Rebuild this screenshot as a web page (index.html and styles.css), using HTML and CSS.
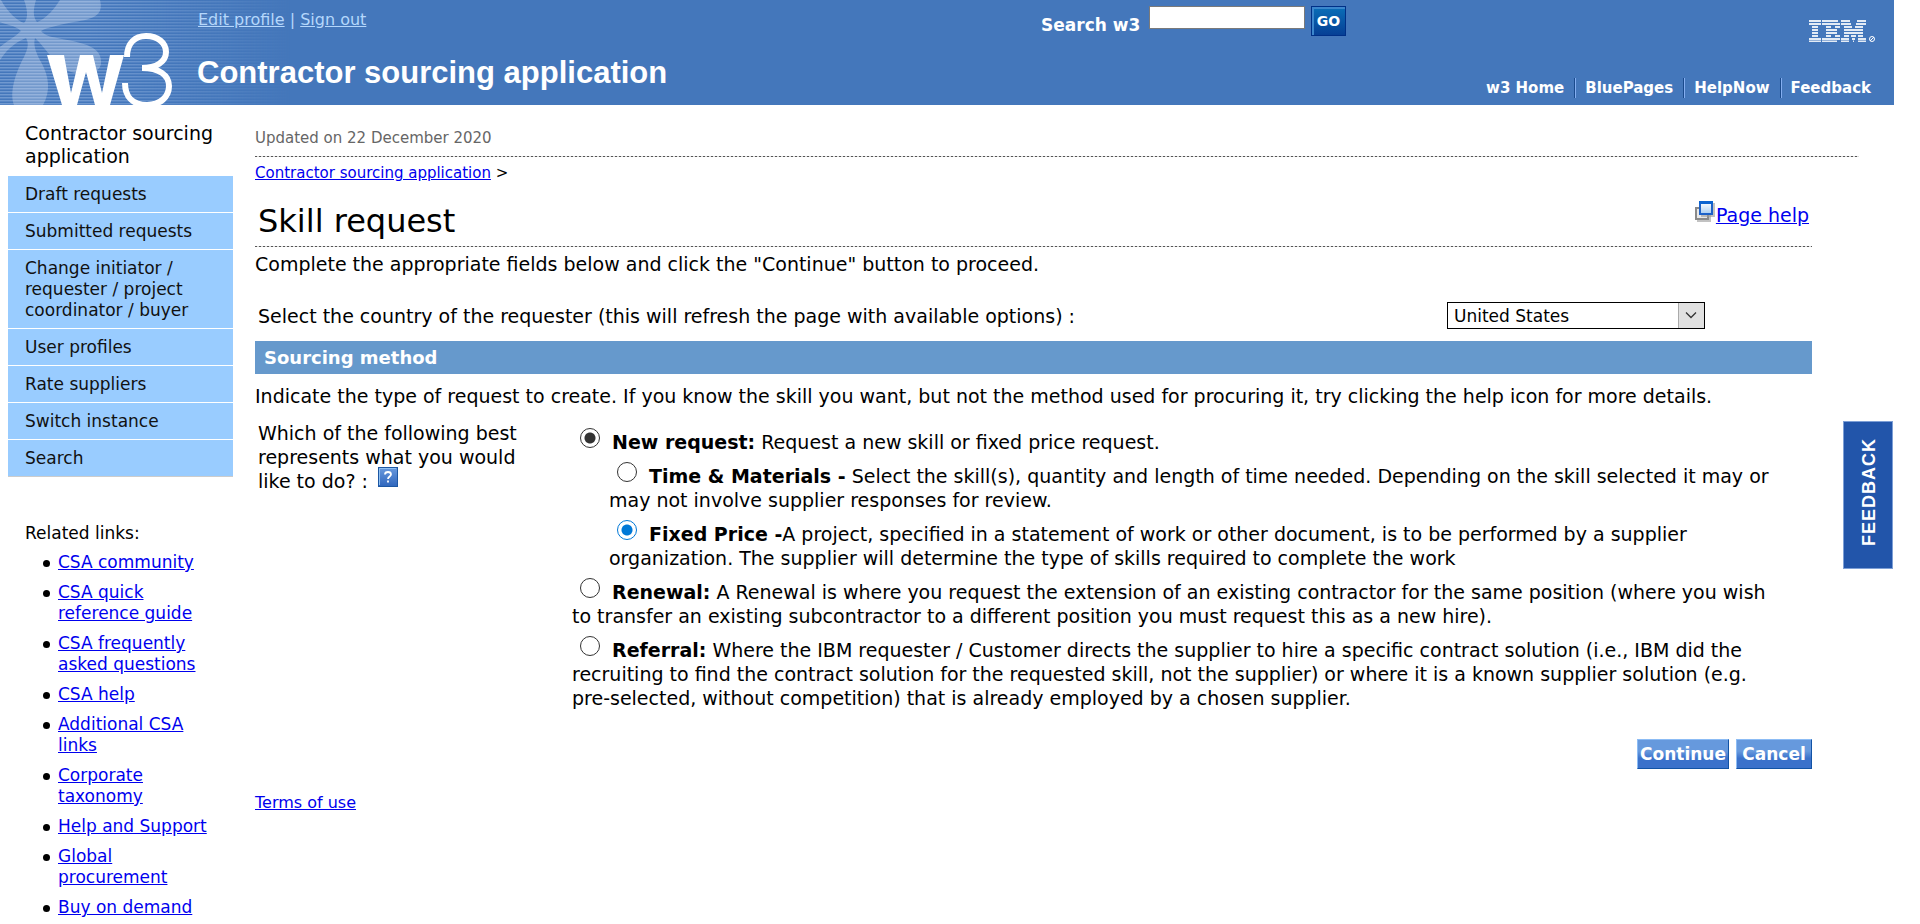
FILE: index.html
```html
<!DOCTYPE html>
<html lang="en">
<head>
<meta charset="utf-8">
<title>Contractor sourcing application</title>
<link rel="stylesheet" href="styles.css">
</head>
<body>
<header class="masthead">
  <div class="stripes"></div>
  <svg class="logo" viewBox="0 0 180 105" aria-label="w3">
    <g fill="#fff" fill-opacity=".25">
      <path d="M0 0H1C8 13 18 21 24 23C29 18 27 8 24 0H36C33 10 33 17 37 22C46 19 55 8 60 0H100C104 15 94 19 74 22C60 25 48 27 41 31C45 36 52 37 62 39C84 43 103 47 101 64C99 74 84 76 71 72C55 66 46 48 35 38C33 45 36 53 41 62C49 76 51 91 43 105H14C9 92 16 72 24 57C28 49 29 43 26 38C19 41 9 46 0 60V47C7 41 15 37 21 31C15 25 6 25 0 22Z"/>
    </g>
    <path fill="#fff" d="M47 55H64L71 93L80 55H93L102 93L110 55H124L110 105H95L86 72L77 105H62Z"/>
    <path fill="none" stroke="#fff" stroke-width="6" d="M127 57C127 43 135 36 146 36C158 36 166 43 166 52C166 62 156 68 142 68C159 68 169 75 169 86C169 97 160 105 147 105C133 105 125 97 125 83"/>
  </svg>
  <div class="brand">
    <nav class="account"><a href="#">Edit profile</a> | <a href="#">Sign out</a></nav>
    <div class="site-title">Contractor sourcing application</div>
  </div>
  <form class="search">
    <label for="q">Search w3</label>
    <input id="q" type="text">
    <button type="button">GO</button>
  </form>
  <div class="corner">
    <svg class="ibm" viewBox="0 0 66 22" aria-label="IBM">
      <path stroke="#fff" stroke-opacity=".85" stroke-width="2" d="M0 1H12M13 1H29M32 1H41M48 1H57M0 4H12M13 4H31M32 4H42M47 4H57M3 7H9M17 7H22M26 7H31M35 7H43M46 7H54M3 10H9M17 10H28M35 10H54M3 13H9M17 13H28M35 13H54M3 16H9M17 16H22M26 16H31M35 16H40M42 16H47M49 16H54M0 19H12M13 19H31M32 19H40M43 19H46M49 19H57M0 21.500H12M13 21.500H28M32 21.500H40M44 21.500H45M49 21.500H57"/>
      <circle cx="63" cy="19" r="2.500" fill="none" stroke="#fff"/><path d="M61 21L65 17" stroke="#fff"/>
    </svg>
    <nav class="global"><a href="#">w3 Home</a><a href="#">BluePages</a><a href="#">HelpNow</a><a href="#">Feedback</a></nav>
  </div>
</header>
<div class="columns">
  <aside class="side">
    <div class="side-title">Contractor sourcing application</div>
    <nav class="menu">
      <a href="#">Draft requests</a>
      <a href="#">Submitted requests</a>
      <a href="#">Change initiator / requester / project coordinator / buyer</a>
      <a href="#">User profiles</a>
      <a href="#">Rate suppliers</a>
      <a href="#">Switch instance</a>
      <a href="#">Search</a>
    </nav>
    <div class="related-title">Related links:</div>
    <ul class="related">
      <li><a href="#">CSA community</a></li>
      <li><a href="#">CSA quick reference guide</a></li>
      <li><a href="#">CSA frequently asked questions</a></li>
      <li><a href="#">CSA help</a></li>
      <li><a href="#">Additional CSA links</a></li>
      <li><a href="#">Corporate taxonomy</a></li>
      <li><a href="#">Help and Support</a></li>
      <li><a href="#">Global procurement</a></li>
      <li><a href="#">Buy on demand</a></li>
    </ul>
  </aside>
  <main class="main">
    <div class="updated">Updated on 22 December 2020</div>
    <div class="rule"></div>
    <div class="crumbs"><a href="#">Contractor sourcing application</a> &gt;</div>
    <div class="content">
      <div class="title-row">
        <h1>Skill request</h1>
        <div class="help">
          <svg class="help-icon" viewBox="0 0 20 21">
            <defs><linearGradient id="pane" x2="0" y2="1"><stop offset="0" stop-color="#fff"/><stop offset="1" stop-color="#a8cdf2"/></linearGradient></defs>
            <path fill="#999" fill-opacity=".6" d="M2 7H16V21H2Z"/>
            <path fill="#e8e8e8" stroke="#8a8a8a" stroke-width="2" d="M1 7H13V18H1Z"/>
            <path fill="#999" fill-opacity=".6" d="M6 2H20V16H6Z"/>
            <path fill="url(#pane)" stroke="#1e62c8" stroke-width="2" d="M5 1H17V13H5Z"/>
            <path fill="#0a63d0" d="M4 0H18V3H4Z"/>
          </svg><a href="#">Page help</a>
        </div>
      </div>
      <div class="rule"></div>
      <p class="intro">Complete the appropriate fields below and click the "Continue" button to proceed.</p>
      <form>
        <div class="country-row">
          <label for="country">Select the country of the requester (this will refresh the page with available options) :</label>
          <div class="select-box">
            <select id="country"><option>United States</option></select>
            <svg class="chevron" viewBox="0 0 25 24"><path fill="none" stroke="#333" stroke-width="1.300" d="M7 9L12 14L17 9"/></svg>
          </div>
        </div>
        <h2>Sourcing method</h2>
        <p class="lead">Indicate the type of request to create. If you know the skill you want, but not the method used for procuring it, try clicking the help icon for more details.</p>
        <div class="question-row">
          <div class="question">Which of the following best represents what you would like to do? : <svg class="q-icon" viewBox="0 0 20 20">
            <defs><linearGradient id="qg" x2="0" y2="1"><stop offset="0" stop-color="#6a9ade"/><stop offset="1" stop-color="#2f66bd"/></linearGradient></defs>
            <rect x=".5" y=".5" width="19" height="19" fill="url(#qg)" stroke="#1d57a3"/>
            <path d="M1.500 18V1.500H18" fill="none" stroke="#8fc0f2"/>
            <path d="M7 7.500C7 5.500 8.500 5 10 5C12 5 13 6 13 7.500C13 9.500 10 9.500 10 12M10 13.500V15.500" fill="none" stroke="#fff" stroke-width="1.800"/></svg></div>
          <div class="choices">
            <div class="choice"><input type="radio" name="kind" id="new" checked><label for="new"><b>New request:</b> Request a new skill or fixed price request.</label></div>
            <div class="choice sub"><input type="radio" name="type" id="tm"><label for="tm"><b>Time &amp; Materials -</b> Select the skill(s), quantity and length of time needed. Depending on the skill selected it may or<br>may not involve supplier responses for review.</label></div>
            <div class="choice sub"><input class="active" type="radio" name="type" id="fp" checked><label for="fp"><b>Fixed Price -</b>A project, specified in a statement of work or other document, is to be performed by a supplier<br>organization. The supplier will determine the type of skills required to complete the work</label></div>
            <div class="choice"><input type="radio" name="kind" id="ren"><label for="ren"><b>Renewal:</b> A Renewal is where you request the extension of an existing contractor for the same position (where you wish<br>to transfer an existing subcontractor to a different position you must request this as a new hire).</label></div>
            <div class="choice"><input type="radio" name="kind" id="ref"><label for="ref"><b>Referral:</b> Where the IBM requester / Customer directs the supplier to hire a specific contract solution (i.e., IBM did the<br>recruiting to find the contract solution for the requested skill, not the supplier) or where it is a known supplier solution (e.g.<br>pre-selected, without competition) that is already employed by a chosen supplier.</label></div>
          </div>
        </div>
        <div class="actions"><button type="button">Continue</button><button type="button" class="cancel">Cancel</button></div>
      </form>
      <div class="terms"><a href="#">Terms of use</a></div>
    </div>
  </main>
</div>
<button type="button" class="feedback"><span>FEEDBACK</span></button>
</body>
</html>
```

FILE: styles.css
```css
* { box-sizing: border-box; }
body {
  margin: 0;
  padding-right: 26px;
  background: #fff;
  color: #000;
  font: 19px/24px Verdana, "DejaVu Sans", sans-serif;
}
a { color: #0000ee; }
h1, h2, p { margin: 0; }

.masthead {
  position: relative;
  display: flex;
  height: 105px;
  background: #4477bb;
  color: #fff;
}
.stripes {
  position: absolute;
  inset: 0 auto 0 0;
  width: 290px;
  background: repeating-linear-gradient(#4477bb 0 1px, #7099d0 1px 2px, #5886c5 2px 3px);
  mask-image: linear-gradient(90deg, #000 30%, transparent);
}
.logo { position: relative; width: 180px; height: 105px; flex: none; }
.brand { position: relative; width: 861px; padding: 9px 0 0 17px; }
.account { color: #b5d7fb; font-size: 16px; line-height: 21px; margin-left: 1px; }
.account a { color: #b5d7fb; }
.site-title {
  margin-top: 25px;
  font: bold 31px/36px Arial, "Liberation Sans", sans-serif;
}
.search { display: flex; align-items: flex-start; padding-top: 6px; }
.search label { width: 108px; font-size: 17px; font-weight: bold; line-height: 38px; }
.search input {
  width: 156px;
  height: 23px;
  border: 1px solid #7a7a7a;
  background: #fff;
}
.search button {
  width: 35px;
  height: 30px;
  margin-left: 6px;
  padding: 0;
  border: 1px solid #003087;
  background: linear-gradient(#0a6fb8, #063f95);
  box-shadow: inset 1px 1px 0 1px #3b86cc;
  color: #fff;
  font: bold 14px/20px Verdana, "DejaVu Sans", sans-serif;
}
.corner {
  display: flex;
  flex-direction: column;
  align-items: flex-end;
  margin-left: auto;
  padding: 20px 19px 0 0;
}
.ibm { width: 66px; height: 22px; }
.global { display: flex; margin-top: 36px; margin-right: 4px; }
.global a {
  color: #fff;
  font-size: 15px;
  font-weight: bold;
  line-height: 20px;
  text-decoration: none;
}
.global a + a {
  margin-left: 10px;
  padding-left: 10px;
  border-left: 1px solid #1a4a8c;
  box-shadow: inset 1px 0 #84aef0;
}

.columns { display: flex; }
.side { width: 255px; flex: none; padding: 17px 22px 0 8px; }
.side-title { padding: 0 0 8px 17px; font-size: 19px; line-height: 23px; }
.menu a {
  display: block;
  padding: 8px 24px 7px 17px;
  border-bottom: 1px solid #fff;
  background: #99ccff;
  color: #111;
  font-size: 17px;
  line-height: 21px;
  text-decoration: none;
}
.menu a:last-child { border-bottom-color: #ccc; }
.related-title { margin-top: 46px; padding-left: 17px; font-size: 17px; line-height: 21px; }
.related { margin: 0; padding: 4px 16px 0 50px; font-size: 17px; line-height: 21px; list-style: none; }
.related li { position: relative; padding: 4px 0 5px; }
.related li::before {
  content: "";
  position: absolute;
  top: 12px;
  left: -15px;
  width: 7px;
  height: 7px;
  border-radius: 50%;
  background: #000;
}

.main { flex: 1; min-width: 0; padding: 22px 35px 0 0; }
.updated { color: #666; font-size: 15px; line-height: 22px; }
.rule {
  height: 1px;
  background: repeating-linear-gradient(90deg, #555 0 2px, #ddd 2px 4px);
}
.updated + .rule { margin-top: 7px; }
.crumbs { padding: 6px 0; font-size: 15px; line-height: 20px; }
.content { margin-right: 47px; }
.title-row { display: flex; justify-content: space-between; padding: 12px 3px 0; height: 57px; }
h1 { font-size: 32px; font-weight: normal; line-height: 40px; }
.help-icon { width: 20px; height: 21px; margin-right: 1px; }
.intro { padding-top: 5px; }
.country-row { display: flex; align-items: center; justify-content: space-between; padding: 26px 107px 12px 3px; }
.select-box { position: relative; width: 258px; }
select {
  display: block;
  appearance: none;
  width: 100%;
  height: 27px;
  padding: 1px 6px 0;
  border: 1px solid #000;
  border-radius: 0;
  background: #fff;
  color: #000;
  font: 17px Verdana, "DejaVu Sans", sans-serif;
}
.chevron {
  position: absolute;
  top: 1px;
  right: 1px;
  width: 26px;
  height: 25px;
  border-left: 1px solid #aaa;
  background: #e1e1e1;
  pointer-events: none;
}
h2 {
  padding: 5px 9px 4px;
  background: #6699cc;
  color: #fff;
  font-size: 18px;
  line-height: 24px;
}
.lead { padding-top: 10px; white-space: nowrap; }
.question-row { display: flex; padding-top: 13px; }
.question { width: 317px; flex: none; padding: 0 40px 0 3px; }
.q-icon { width: 20px; height: 20px; margin: -4px 0 0 4px; vertical-align: 1px; }
.choices { flex: 1; min-width: 0; padding-top: 9px; }
.choice { padding-bottom: 10px; }
.sub { padding-left: 37px; }
.choice input {
  appearance: none;
  width: 20px;
  height: 20px;
  margin: -4px 12px 0 8px;
  border: 1px solid #333;
  border-radius: 50%;
  background: #fff;
  vertical-align: 1px;
}
.choice input:checked { background: radial-gradient(circle, #333 0 5px, #fff 6px); }
.choice input.active { border-color: #0078d7; }
.choice input.active:checked { background: radial-gradient(circle, #0078d7 0 5px, #fff 6px); }
.actions { display: flex; justify-content: flex-end; gap: 7px; padding-top: 19px; }
.actions button {
  width: 92px;
  height: 30px;
  padding: 0;
  border: 1px solid;
  border-color: #8cbcf5 #1253a5 #1253a5 #8cbcf5;
  background: linear-gradient(#6699dd 40%, #3b72cb 65%);
  color: #fff;
  font: bold 17px Verdana, "DejaVu Sans", sans-serif;
}
.actions .cancel { width: 76px; }
.terms { padding-top: 23px; font-size: 16px; line-height: 22px; }

.feedback {
  position: fixed;
  top: 421px;
  right: 27px;
  width: 50px;
  height: 148px;
  padding: 0 0 0 3px;
  border: 1px solid #7d9fd6;
  background: #2255aa;
  color: #fff;
  font: bold 18px Arial, "Liberation Sans", sans-serif;
}
.feedback span { writing-mode: vertical-rl; transform: rotate(180deg); display: inline-block; letter-spacing: 1px; }
```
